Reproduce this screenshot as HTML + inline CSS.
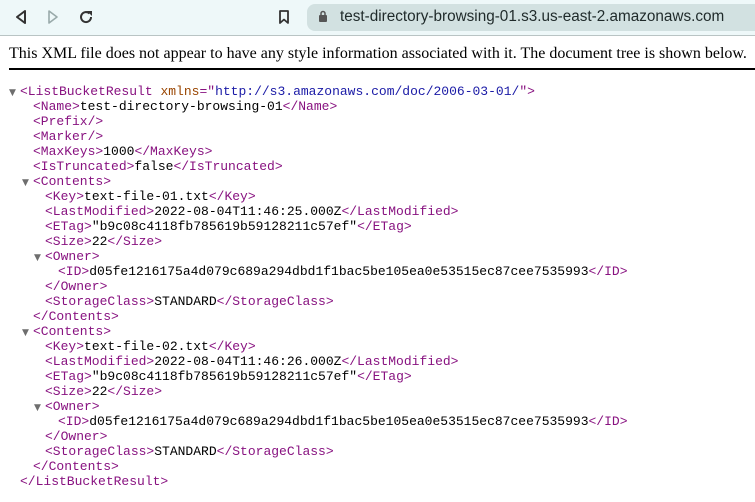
<!DOCTYPE html>
<html><head><meta charset="utf-8"><style>
body{margin:0;width:755px;height:502px;overflow:hidden;background:#fff;position:relative}
.bar{position:absolute;left:0;top:0;width:755px;height:35px;background:#eef8f9;border-bottom:1px solid #b9c4c4}
.pill{position:absolute;left:307px;top:4px;width:460px;height:27px;border-radius:8px;background:#d2e1e1}
.url{position:absolute;left:340px;top:8px;font:15.3px "Liberation Sans",sans-serif;color:#1f2a2a}
.msg{position:absolute;left:9px;top:45px;font:16px "Liberation Serif",serif;color:#000;white-space:nowrap}
.rule{position:absolute;left:9px;top:68px;width:746px;height:2px;background:#000}
.l{position:absolute;font:13px "Liberation Mono",monospace;white-space:pre;color:#000;line-height:15px}
.t{color:#881280}.a{color:#994500}.v{color:#1a1aa6}
.tri{position:absolute;font:9px "DejaVu Sans",sans-serif;color:#6e6e6e}
</style></head><body>
<div class="bar">
<svg style="position:absolute;left:14px;top:9px" width="14" height="16" viewBox="0 0 14 16"><path d="M11 2 L3 8 L11 14 Z" fill="none" stroke="#333" stroke-width="2" stroke-linejoin="round"/></svg>
<svg style="position:absolute;left:46px;top:9px" width="14" height="16" viewBox="0 0 14 16"><path d="M3 2 L11 8 L3 14 Z" fill="none" stroke="#9aa" stroke-width="1.6" stroke-linejoin="round"/></svg>
<svg style="position:absolute;left:78px;top:9px" width="16" height="16" viewBox="0 0 16 16"><path d="M13 8 A5 5 0 1 1 11.5 4.5" fill="none" stroke="#333" stroke-width="2"/><path d="M9 2 L14 2 L14 7 Z" fill="#333"/></svg>
<svg style="position:absolute;left:278px;top:9px" width="12" height="16" viewBox="0 0 12 16"><path d="M2 2 H10 V14 L6 10.5 L2 14 Z" fill="none" stroke="#333" stroke-width="1.8" stroke-linejoin="round"/></svg>
<div class="pill"></div>
<svg style="position:absolute;left:318px;top:10px" width="10" height="13" viewBox="0 0 10 13"><rect x="1" y="5" width="8" height="7" rx="1" fill="#555"/><path d="M3 5 V3.5 A2 2 0 0 1 7 3.5 V5" fill="none" stroke="#555" stroke-width="1.5"/></svg>
<div class="url">test-directory-browsing-01.s3.us-east-2.amazonaws.com</div>
</div>
<div class="msg">This XML file does not appear to have any style information associated with it. The document tree is shown below.</div>
<div class="rule"></div>

<span class="tri" style="left:9px;top:88px">▼</span>
<div class="l" style="left:20px;top:84px"><span class="t">&lt;ListBucketResult</span> <span class="a">xmlns</span><span class="t">="</span><span class="v">http://s3.amazonaws.com/doc/2006-03-01/</span><span class="t">"&gt;</span></div>
<div class="l" style="left:33px;top:99px"><span class="t">&lt;Name&gt;</span>test-directory-browsing-01<span class="t">&lt;/Name&gt;</span></div>
<div class="l" style="left:33px;top:114px"><span class="t">&lt;Prefix/&gt;</span></div>
<div class="l" style="left:33px;top:129px"><span class="t">&lt;Marker/&gt;</span></div>
<div class="l" style="left:33px;top:144px"><span class="t">&lt;MaxKeys&gt;</span>1000<span class="t">&lt;/MaxKeys&gt;</span></div>
<div class="l" style="left:33px;top:159px"><span class="t">&lt;IsTruncated&gt;</span>false<span class="t">&lt;/IsTruncated&gt;</span></div>
<span class="tri" style="left:22px;top:178px">▼</span>
<div class="l" style="left:33px;top:174px"><span class="t">&lt;Contents&gt;</span></div>
<div class="l" style="left:45px;top:189px"><span class="t">&lt;Key&gt;</span>text-file-01.txt<span class="t">&lt;/Key&gt;</span></div>
<div class="l" style="left:45px;top:204px"><span class="t">&lt;LastModified&gt;</span>2022-08-04T11:46:25.000Z<span class="t">&lt;/LastModified&gt;</span></div>
<div class="l" style="left:45px;top:219px"><span class="t">&lt;ETag&gt;</span>"b9c08c4118fb785619b59128211c57ef"<span class="t">&lt;/ETag&gt;</span></div>
<div class="l" style="left:45px;top:234px"><span class="t">&lt;Size&gt;</span>22<span class="t">&lt;/Size&gt;</span></div>
<span class="tri" style="left:34px;top:253px">▼</span>
<div class="l" style="left:45px;top:249px"><span class="t">&lt;Owner&gt;</span></div>
<div class="l" style="left:58px;top:264px"><span class="t">&lt;ID&gt;</span>d05fe1216175a4d079c689a294dbd1f1bac5be105ea0e53515ec87cee7535993<span class="t">&lt;/ID&gt;</span></div>
<div class="l" style="left:45px;top:279px"><span class="t">&lt;/Owner&gt;</span></div>
<div class="l" style="left:45px;top:294px"><span class="t">&lt;StorageClass&gt;</span>STANDARD<span class="t">&lt;/StorageClass&gt;</span></div>
<div class="l" style="left:33px;top:309px"><span class="t">&lt;/Contents&gt;</span></div>
<span class="tri" style="left:22px;top:328px">▼</span>
<div class="l" style="left:33px;top:324px"><span class="t">&lt;Contents&gt;</span></div>
<div class="l" style="left:45px;top:339px"><span class="t">&lt;Key&gt;</span>text-file-02.txt<span class="t">&lt;/Key&gt;</span></div>
<div class="l" style="left:45px;top:354px"><span class="t">&lt;LastModified&gt;</span>2022-08-04T11:46:26.000Z<span class="t">&lt;/LastModified&gt;</span></div>
<div class="l" style="left:45px;top:369px"><span class="t">&lt;ETag&gt;</span>"b9c08c4118fb785619b59128211c57ef"<span class="t">&lt;/ETag&gt;</span></div>
<div class="l" style="left:45px;top:384px"><span class="t">&lt;Size&gt;</span>22<span class="t">&lt;/Size&gt;</span></div>
<span class="tri" style="left:34px;top:403px">▼</span>
<div class="l" style="left:45px;top:399px"><span class="t">&lt;Owner&gt;</span></div>
<div class="l" style="left:58px;top:414px"><span class="t">&lt;ID&gt;</span>d05fe1216175a4d079c689a294dbd1f1bac5be105ea0e53515ec87cee7535993<span class="t">&lt;/ID&gt;</span></div>
<div class="l" style="left:45px;top:429px"><span class="t">&lt;/Owner&gt;</span></div>
<div class="l" style="left:45px;top:444px"><span class="t">&lt;StorageClass&gt;</span>STANDARD<span class="t">&lt;/StorageClass&gt;</span></div>
<div class="l" style="left:33px;top:459px"><span class="t">&lt;/Contents&gt;</span></div>
<div class="l" style="left:20px;top:474px"><span class="t">&lt;/ListBucketResult&gt;</span></div>
</body></html>
